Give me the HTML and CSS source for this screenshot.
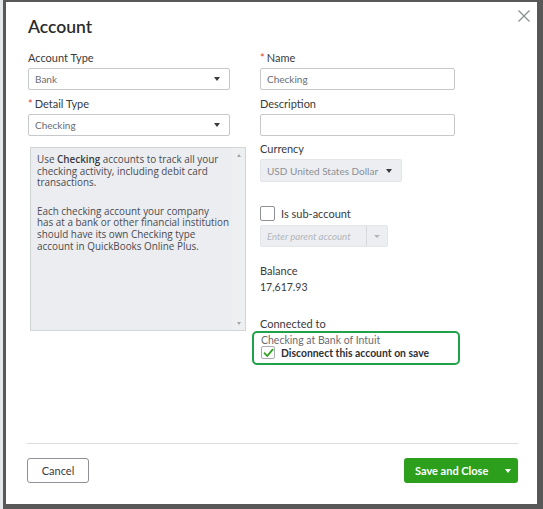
FILE: index.html
```html
<!DOCTYPE html>
<html lang="en">
<head>
<meta charset="utf-8">
<title>Account</title>
<link rel="stylesheet" href="styles.css">
</head>
<body>
<div class="backdrop">
  <div class="modal">
    <header class="modal-head">
      <h1 class="modal-title">Account</h1>
      <button class="close" aria-label="Close">
        <svg width="12" height="12" viewBox="0 0 12 12"><path d="M0.5 0.5 L11.5 11.5 M11.5 0.5 L0.5 11.5" stroke="#8d9096" stroke-width="1.3" fill="none"/></svg>
      </button>
    </header>

    <div class="form">
      <div class="col col-left">
        <label class="label">Account Type</label>
        <div class="select"><span>Bank</span><i class="caret"></i></div>

        <label class="label label-gap"><span class="req">*</span>Detail Type</label>
        <div class="select"><span>Checking</span><i class="caret"></i></div>

        <div class="help">
          <div class="help-text">
            <p>Use <b>Checking</b> accounts to track all your<br>checking activity, including debit card<br>transactions.</p>
            <p>Each checking account your company<br>has at a bank or other financial institution<br>should have its own Checking type<br>account in QuickBooks Online Plus.</p>
          </div>
          <div class="scrollbar">
            <i class="sb-up"></i>
            <i class="sb-down"></i>
          </div>
        </div>
      </div>

      <div class="col col-right">
        <label class="label"><span class="req">*</span>Name</label>
        <div class="input">Checking</div>

        <label class="label label-gap">Description</label>
        <div class="input"></div>

        <label class="label label-gap2">Currency</label>
        <div class="select select-gray currency"><span>USD United States Dollar</span><i class="caret"></i></div>

        <div class="check-row">
          <span class="checkbox"></span>
          <span class="check-label">Is sub-account</span>
        </div>
        <div class="parent">
          <span class="parent-text">Enter parent account</span>
          <span class="parent-btn"><i class="caret caret-light"></i></span>
        </div>

        <label class="label balance-label">Balance</label>
        <div class="value">17,617.93</div>

        <label class="label connected-label">Connected to</label>
        <div class="connected">
          <div class="bank">Checking at Bank of Intuit</div>
          <div class="check-row tight">
            <span class="checkbox checked">
              <svg width="11" height="10" viewBox="0 0 11 10"><path d="M1.5 5.2 L4.2 8 L9.6 1.6" stroke="#2ca01c" stroke-width="1.8" fill="none" stroke-linecap="round" stroke-linejoin="round"/></svg>
            </span>
            <span class="disconnect">Disconnect this account on save</span>
          </div>
        </div>
      </div>
    </div>

    <footer class="modal-foot">
      <button class="btn btn-cancel">Cancel</button>
      <button class="btn btn-save"><span>Save and Close</span><i class="caret caret-white"></i></button>
    </footer>
  </div>
</div>
</body>
</html>
```

FILE: styles.css
```css
* { box-sizing: border-box; }

html, body {
  margin: 0;
  height: 100%;
}

body {
  font-family: Lato, "Open Sans", sans-serif;
  color: #393a3d;
  background: #585858;
}

.backdrop {
  height: 509px;
  padding: 2px 6px 5px 3px;
  border-left: 3px solid #e6e7e8;
  background: #585858;
  display: flex;
}

.modal {
  flex: 1;
  background: #fff;
  display: flex;
  flex-direction: column;
  padding: 0 19px 21px 22px;
}

/* header */
.modal-head {
  display: flex;
  justify-content: space-between;
  align-items: flex-start;
  height: 49px;
  margin-right: -12px;
}

.modal-title {
  margin: 14px 0 0;
  font-size: 17.5px;
  line-height: 22px;
  font-weight: 600;
  color: #2c2c2c;
}

.close {
  border: 0;
  background: none;
  padding: 0;
  margin-top: 8px;
  width: 12px;
  height: 12px;
  display: block;
}
.close svg { display: block; }

/* form columns */
.form {
  flex: 1;
  display: grid;
  grid-template-columns: 202px 195px;
  column-gap: 30px;
  align-items: start;
}

.col {
  display: flex;
  flex-direction: column;
  align-items: flex-start;
}

.label {
  font-size: 11px;
  line-height: 14px;
  color: #393a3d;
  margin-bottom: 3px;
}
.label-gap { margin-top: 7px; }
.label-gap2 { margin-top: 6px; }

.req {
  color: #e3401f;
  margin-right: 2px;
}

.select, .input {
  width: 100%;
  height: 22px;
  border: 1px solid #c6c8cb;
  border-radius: 2px;
  background: #fff;
  font-size: 10px;
  color: #6b6c72;
  display: flex;
  align-items: center;
  padding: 0 6px;
}
.select span { flex: 1; }

.caret {
  width: 0;
  height: 0;
  border-left: 3.5px solid transparent;
  border-right: 3.5px solid transparent;
  border-top: 4px solid #393a3d;
  margin-right: 3px;
}
.caret-light { border-top-color: #b1b3b8; }
.caret-white { border-top-color: #fff; }

/* description of the detail type */
.help {
  margin-top: 11px;
  margin-left: 2px;
  width: 216px;
  height: 184px;
  border: 1px solid #d3d4d7;
  background: #ecedf0;
  display: flex;
}
.help-text {
  flex: 1;
  padding: 6px 0 0 6px;
  font-family: "Open Sans", Lato, sans-serif;
  font-size: 9.9px;
  line-height: 11.7px;
  color: #4a4b50;
  white-space: nowrap;
}
.help-text p { margin: 0 0 16.4px; }
.help-text b { font-weight: 600; color: #393a3d; }

.scrollbar {
  width: 13px;
  background: #eeeff1;
  display: flex;
  flex-direction: column;
  justify-content: space-between;
  align-items: center;
  padding: 6px 0 5px;
}
.sb-up, .sb-down {
  width: 0;
  height: 0;
  border-left: 2.5px solid transparent;
  border-right: 2.5px solid transparent;
}
.sb-up { border-bottom: 3px solid #a4a6ab; }
.sb-down { border-top: 3px solid #a4a6ab; }

/* right column */
.select-gray {
  background: #eceef1;
  border-color: #e4e5e8;
  color: #8d9096;
}
.currency { width: 142px; height: 23px; }

.check-row {
  display: flex;
  align-items: center;
  margin-top: 24px;
  gap: 6px;
}
.checkbox {
  width: 15px;
  height: 15px;
  border: 1px solid #8d9096;
  border-radius: 2px;
  background: #fff;
  display: flex;
  align-items: center;
  justify-content: center;
}
.check-label {
  font-size: 11px;
  color: #393a3d;
}

.parent {
  margin-top: 4px;
  width: 128px;
  height: 22px;
  background: #eceef1;
  border: 1px solid #e4e5e8;
  border-radius: 2px;
  display: flex;
  align-items: center;
}
.parent-text {
  flex: 1;
  padding-left: 6px;
  font-size: 9.6px;
  font-style: italic;
  color: #b5b7bc;
}
.parent-btn {
  width: 21px;
  height: 100%;
  border-left: 1px solid #d8d9dc;
  display: flex;
  align-items: center;
  justify-content: center;
}
.parent-btn .caret { margin: 0; border-left-width: 3px; border-right-width: 3px; border-top-width: 3px; }

.balance-label { margin-top: 17px; margin-bottom: 2px; }
.value {
  font-size: 10.5px;
  line-height: 14px;
  color: #393a3d;
}

.connected-label { margin-top: 23px; margin-bottom: 0; }

.connected {
  margin-left: -8px;
  width: 208px;
  height: 34px;
  border: 2px solid #21a14a;
  border-radius: 5px;
  padding: 1px 0 0 7px;
}
.bank {
  font-size: 10.5px;
  line-height: 12px;
  color: #6b6c72;
}
.check-row.tight { margin-top: 0; gap: 6px; margin-left: 0; }
.checkbox.checked { width: 14px; height: 13px; border-color: #a9abb0; }
.disconnect {
  font-size: 10.4px;
  font-weight: 700;
  color: #2f3034;
}

/* footer */
.modal-foot {
  border-top: 1px solid #dcdde0;
  margin-left: -1px;
  padding-top: 14px;
  display: flex;
  justify-content: space-between;
  align-items: center;
}

.btn {
  height: 25px;
  border-radius: 3px;
  font-family: Lato, sans-serif;
  font-size: 11px;
  padding: 0;
}
.btn-cancel {
  width: 62px;
  border: 1px solid #8d9096;
  background: #fff;
  color: #393a3d;
}
.btn-save {
  width: 114px;
  border: 0;
  background: #2ca01c;
  color: #fff;
  font-weight: 700;
  display: flex;
  align-items: center;
  justify-content: space-between;
  padding: 0 7px 0 11px;
}
.btn-save .caret { margin: 1px 0 0; }
```
